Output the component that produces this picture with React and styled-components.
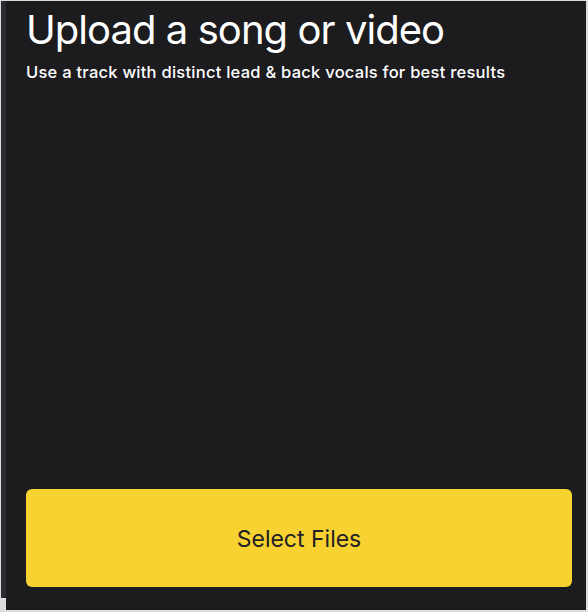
import styled, { createGlobalStyle } from "styled-components"

const GlobalStyle = createGlobalStyle`
  html, body {
    margin: 0;
    padding: 0;
    background: #dcdcdc;
  }
  * {
    box-sizing: border-box;
  }
`

const Frame = styled.div`
  width: 588px;
  height: 612px;
  padding: 1px 2px 2px 1px;
  display: flex;
  background: #dcdcdc;
`

const SideStrip = styled.div`
  width: 5px;
  height: 597px;
  background: #2b2a2e;
  flex-shrink: 0;
`

const Panel = styled.section`
  flex: 1;
  background: #1c1b1e;
  display: flex;
  flex-direction: column;
  padding: 7px 14px 23px 20px;
  font-family: Inter, "Noto Sans", sans-serif;
`

const Title = styled.h1`
  margin: 0;
  font-size: 40px;
  font-weight: 400;
  line-height: 44px;
  color: #ffffff;
  letter-spacing: -0.95px;
`

const Subtitle = styled.p`
  margin: 10px 0 0;
  font-size: 16.5px;
  font-weight: 500;
  line-height: 20px;
  color: #ffffff;
  letter-spacing: 0.25px;
`

const Spacer = styled.div`
  flex: 1;
`

const SelectButton = styled.button`
  height: 98px;
  width: 100%;
  border: none;
  border-radius: 6px;
  background: #f7d231;
  color: #222124;
  font-family: Inter, "Noto Sans", sans-serif;
  font-size: 23px;
  font-weight: 400;
  padding-top: 2px;
  cursor: pointer;
`

export default function App() {
  return (
    <>
      <GlobalStyle />
      <Frame>
        <SideStrip />
        <Panel>
          <Title>Upload a song or video</Title>
          <Subtitle>Use a track with distinct lead &amp; back vocals for best results</Subtitle>
          <Spacer />
          <SelectButton>Select Files</SelectButton>
        </Panel>
      </Frame>
    </>
  )
}
